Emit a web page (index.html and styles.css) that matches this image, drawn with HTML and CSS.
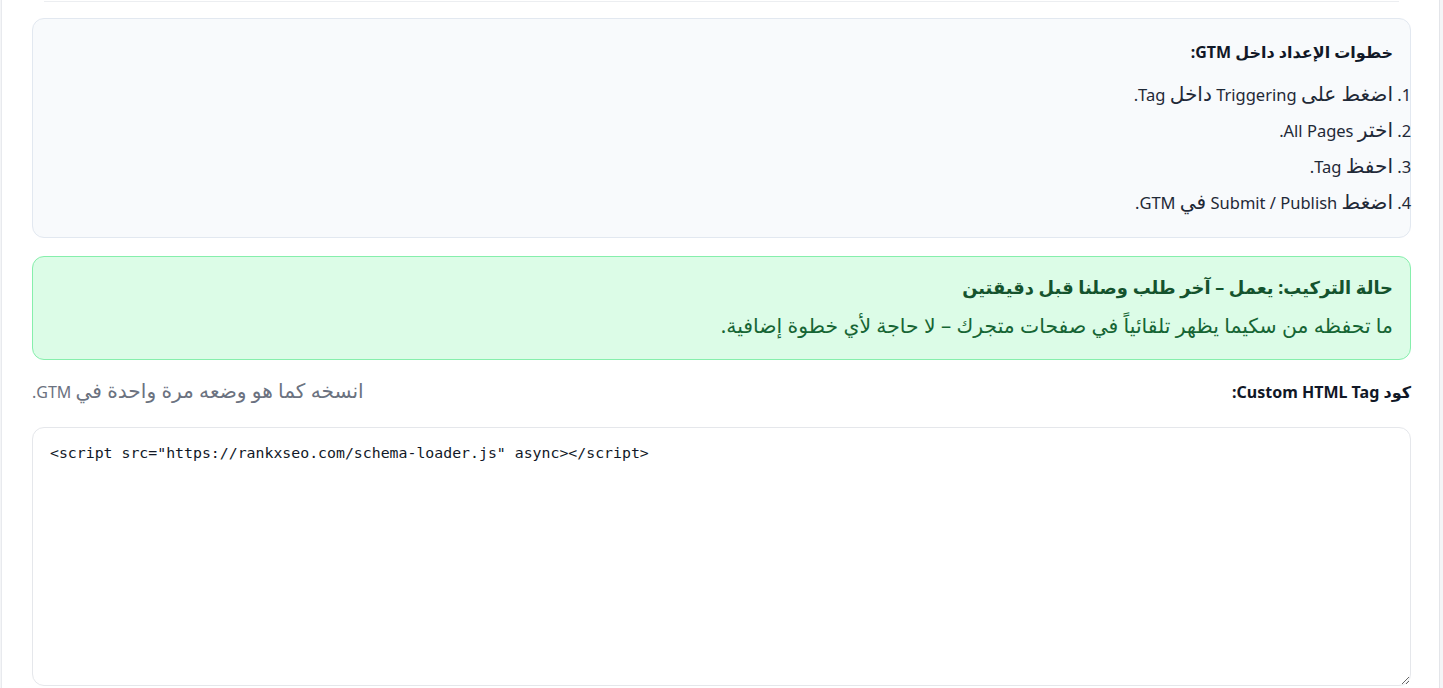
FILE: index.html
```html
<!DOCTYPE html>
<html lang="ar" dir="rtl">
<head>
<meta charset="utf-8">
<title>GTM</title>
<link rel="stylesheet" href="styles.css">
</head>
<body>
<div class="page">
  <div class="prev"></div>
  <section class="steps">
    <h3 class="steps-title">خطوات الإعداد داخل GTM:</h3>
    <ol class="steps-list">
      <li><span class="ar">اضغط على</span> Triggering <span class="ar">داخل</span> Tag.</li>
      <li><span class="ar">اختر</span> All Pages.</li>
      <li><span class="ar">احفظ</span> Tag.</li>
      <li><span class="ar">اضغط</span> Submit / Publish <span class="ar">في</span> GTM.</li>
    </ol>
  </section>
  <section class="status">
    <div class="status-title">حالة التركيب: يعمل – آخر طلب وصلنا قبل دقيقتين</div>
    <div class="status-body"><span class="ar">ما تحفظه من سكيما يظهر تلقائياً في صفحات متجرك – لا حاجة لأي خطوة إضافية.</span></div>
  </section>
  <div class="code-label">
    <span class="code-label-main">كود Custom HTML Tag:</span>
    <span class="code-label-hint"><span class="ar">انسخه كما هو وضعه مرة واحدة في</span> GTM.</span>
  </div>
  <textarea class="code" spellcheck="false">&lt;script src="https://rankxseo.com/schema-loader.js" async&gt;&lt;/script&gt;</textarea>
</div>
</body>
</html>
```

FILE: styles.css
```css
html, body {
  margin: 0;
  padding: 0;
}
body {
  background: #f4f5f7;
  font-family: "Noto Sans", "DejaVu Sans", sans-serif;
  color: #1f2937;
  overflow: hidden;
}
.page {
  margin-right: 3px;
  width: 1439px;
  box-sizing: border-box;
  height: 688px;
  background: #ffffff;
  border-left: 1px solid #e8eaee;
  border-right: 1px solid #e3e5e9;
  padding: 0 28px 0 30px;
}
.prev {
  height: 1px;
  margin: 0 12px;
  border-bottom: 1px solid #eceef1;
}
.ar {
  font-size: 1.2em;
  line-height: 16px;
}
.steps {
  margin-top: 16px;
  background: #f8fafc;
  border: 1px solid #e2e8f0;
  border-radius: 12px;
  padding: 20px 17px 20px 20px;
}
.steps-title {
  margin: 0 0 16px;
  font-size: 16px;
  line-height: 26px;
  font-weight: 700;
  color: #111827;
}
.steps-list {
  margin: 0;
  padding: 0;
  list-style-position: outside;
}
.steps-list li {
  font-size: 16.5px;
  line-height: 28px;
  margin-bottom: 8px;
  color: #1f2937;
}
.steps-list .ar {
  font-size: 1.22em;
}
.steps-list li:last-child {
  margin-bottom: 0;
}
.status {
  margin-top: 18px;
  background: #dcfce7;
  border: 1px solid #86efac;
  border-radius: 12px;
  padding: 16px 17px 18px 20px;
}
.status-title {
  font-size: 17.9px;
  line-height: 28px;
  font-weight: 700;
  color: #14532d;
}
.status-body {
  margin-top: 12px;
  font-size: 17px;
  line-height: 28px;
  color: #166534;
}
.code-label {
  margin-top: 20px;
  display: flex;
  justify-content: space-between;
  align-items: center;
  line-height: 24px;
}
.code-label-main {
  font-size: 16px;
  font-weight: 700;
  color: #111827;
}
.code-label-hint {
  font-size: 16px;
  color: #6b7280;
}
.code-label-hint .ar {
  font-size: 1.26em;
}
.code {
  display: block;
  margin-top: 23px;
  width: 100%;
  height: 259px;
  box-sizing: border-box;
  direction: ltr;
  text-align: left;
  border: 1px solid #e5e7eb;
  border-radius: 12px;
  padding: 15px 17px;
  font-family: "DejaVu Sans Mono", "Liberation Mono", monospace;
  font-size: 14.85px;
  line-height: 20px;
  color: #111827;
  background: #ffffff;
  outline: none;
  resize: vertical;
}
```
